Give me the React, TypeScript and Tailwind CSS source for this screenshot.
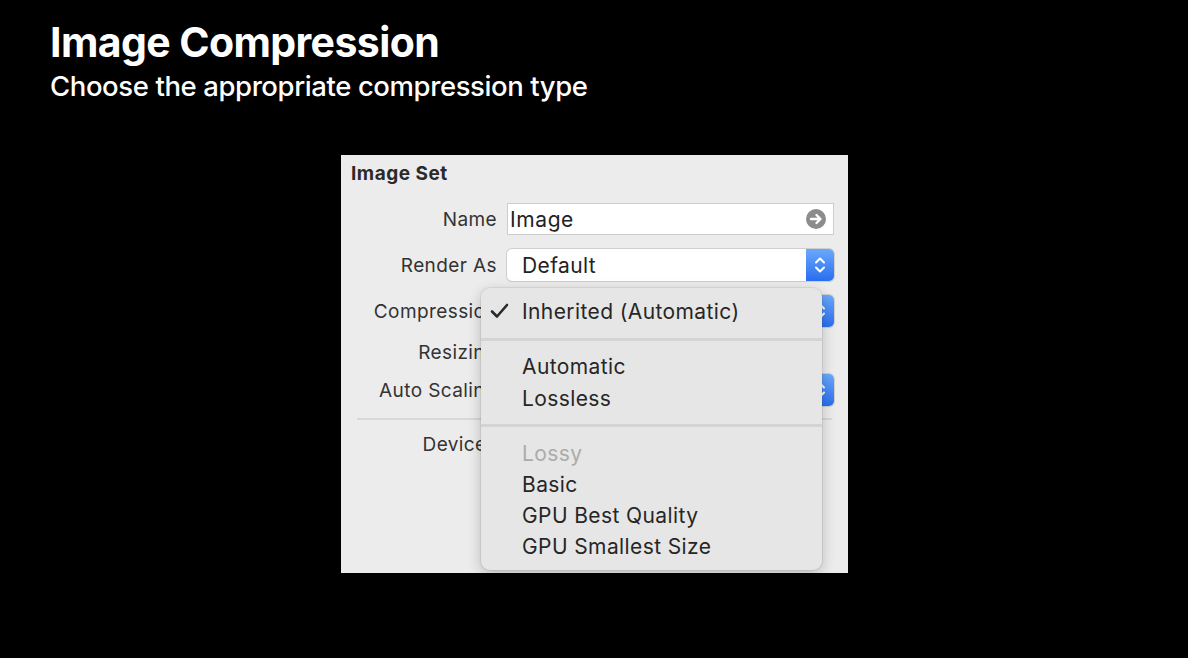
import React from 'react';

const font = { fontFamily: 'Inter, "Noto Sans", sans-serif' };

const Chevrons = () => (
  <svg width="12" height="20" viewBox="0 0 12 20" fill="none" stroke="white" strokeWidth="2" strokeLinecap="round" strokeLinejoin="round">
    <path d="M2 7.5 L6 3.5 L10 7.5" />
    <path d="M2 12.5 L6 16.5 L10 12.5" />
  </svg>
);

const PopUp = ({ value }: { value: string }) => (
  <div className="flex h-[32px] w-[327px] rounded-[5px] bg-white shadow-[0_0_0_1px_#cfcfcf,0_1px_1px_rgba(0,0,0,0.15)] overflow-hidden">
    <div className="flex-1 flex items-center pl-[15px] pt-[2px] text-[21px] tracking-[0.4px] text-[#222]">{value}</div>
    <div className="w-[28px] flex items-center justify-center bg-gradient-to-b from-[#6aa8fb] to-[#2a6df0]">
      <Chevrons />
    </div>
  </div>
);

const Row = ({ label, children, className }: { label: string; children?: React.ReactNode; className?: string }) => (
  <div className={`flex items-center h-[32px] ${className ?? ''}`}>
    <div className="w-[156px] pt-[2px] text-right text-[19px] tracking-[0.4px] text-[#333] whitespace-nowrap">{label}</div>
    <div className="ml-[10px]">{children}</div>
  </div>
);

const Check = () => (
  <svg width="19" height="16" viewBox="0 0 19 16" fill="none" stroke="#2a2a2a" strokeWidth="2.6" strokeLinecap="round" strokeLinejoin="round">
    <path d="M2 8.5 L7 13.5 L17 2" />
  </svg>
);

const MenuItem = ({ label, checked, disabled, h = 'h-[32px]' }: { label: string; checked?: boolean; disabled?: boolean; h?: string }) => (
  <div className={`flex items-center ${h} text-[21px] tracking-[0.4px] ${disabled ? 'text-[#ababab]' : 'text-[#262626]'}`}>
    <div className="w-[41px] pl-[9px] flex items-center">{checked ? <Check /> : null}</div>
    <div className="pt-[2px]">{label}</div>
  </div>
);

const Separator = ({ className }: { className?: string }) => <div className={`h-[3px] bg-[#d4d4d4] ${className ?? ''}`} />;

export default function App() {
  return (
    <div className="w-[1188px] h-[658px] bg-black overflow-hidden" style={font}>
      {/* Slide heading */}
      <div className="pl-[50px] pt-[18px] text-white">
        <h1 className="text-[41px] leading-[48px] font-bold tracking-[-0.6px]">Image Compression</h1>
        <p className="mt-[3px] text-[27.5px] leading-[34px] font-medium tracking-[-0.4px]">Choose the appropriate compression type</p>
      </div>

      {/* Inspector panel */}
      <div className="relative ml-[341px] mt-[52px] w-[507px] h-[418px] bg-[#ececec] overflow-hidden">
        <div className="pl-[10px] pt-[5px] h-[48px] text-[19px] tracking-[0.5px] font-bold text-[#2a2a2a]">Image Set</div>

        <Row label="Name">
          <div className="flex items-center h-[32px] w-[327px] bg-white border border-[#cdcdcd] pl-[2px] pr-[7px] text-[21px] tracking-[0.6px] text-[#222]">
            <span className="flex-1 pt-[2px]">Image</span>
            <svg width="20" height="20" viewBox="0 0 20 20">
              <circle cx="10" cy="10" r="10" fill="#8c8c8c" />
              <path d="M5 10 H14 M10.5 6 L14.5 10 L10.5 14" stroke="white" strokeWidth="2.4" fill="none" strokeLinecap="round" strokeLinejoin="round" />
            </svg>
          </div>
        </Row>
        <Row label="Render As" className="mt-[14px]">
          <PopUp value="Default" />
        </Row>
        <Row label="Compression" className="mt-[14px]">
          <PopUp value="" />
        </Row>
        <Row label="Resizing" className="mt-[9px]" />
        <Row label="Auto Scaling" className="mt-[6px]">
          <PopUp value="" />
        </Row>
        <div className="mx-[16px] mt-[12px] h-[2px] bg-[#d8d8d8]" />
        <Row label="Devices" className="mt-[8px]" />

        {/* Open pop-up menu */}
        <div className="absolute left-[140px] top-[133px] w-[341px] h-[282px] rounded-[9px] bg-[#e6e6e6] shadow-[0_4px_14px_rgba(0,0,0,0.22),0_0_0_1px_rgba(0,0,0,0.06)] pt-[7px]">
          <MenuItem label="Inherited (Automatic)" checked />
          <Separator className="mt-[11px] mb-[9px]" />
          <MenuItem label="Automatic" />
          <MenuItem label="Lossless" />
          <Separator className="mt-[10px] mb-[10px]" />
          <MenuItem label="Lossy" disabled h="h-[31px]" />
          <MenuItem label="Basic" h="h-[31px]" />
          <MenuItem label="GPU Best Quality" h="h-[31px]" />
          <MenuItem label="GPU Smallest Size" h="h-[31px]" />
        </div>
      </div>
    </div>
  );
}
